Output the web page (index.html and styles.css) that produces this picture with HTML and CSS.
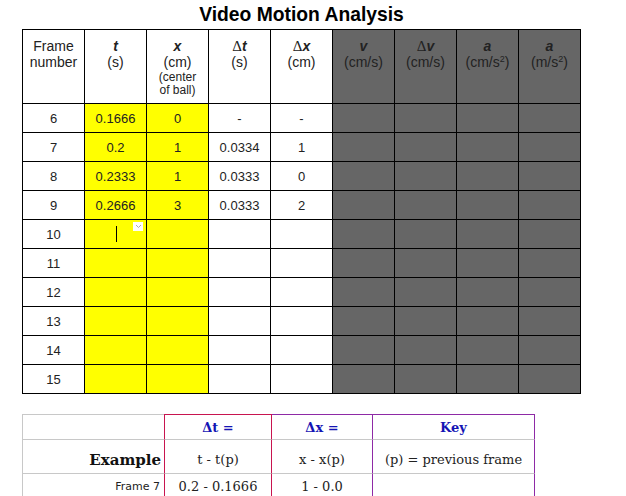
FILE: index.html
```html
<!DOCTYPE html>
<html>
<head>
<meta charset="utf-8">
<link rel="stylesheet" href="styles.css">
</head>
<body>
<div class="page">
  <h1 class="title">Video Motion Analysis</h1>
  <table class="data">
    <thead>
      <tr class="head">
        <th>Frame<br>number</th>
        <th><b><i>t</i></b><br>(s)</th>
        <th><b><i>x</i></b><br>(cm)<br><span class="small">(center<br>of ball)</span></th>
        <th><span class="delta">Δ</span><b><i>t</i></b><br>(s)</th>
        <th><span class="delta">Δ</span><b><i>x</i></b><br>(cm)</th>
        <th class="dark"><b><i>v</i></b><br>(cm/s)</th>
        <th class="dark"><span class="delta">Δ</span><b><i>v</i></b><br>(cm/s)</th>
        <th class="dark"><b><i>a</i></b><br>(cm/s<sup>2</sup>)</th>
        <th class="dark"><b><i>a</i></b><br>(m/s<sup>2</sup>)</th>
      </tr>
    </thead>
    <tbody>
      <tr><td>6</td><td class="yel">0.1666</td><td class="yel">0</td><td>-</td><td>-</td><td class="dark"></td><td class="dark"></td><td class="dark"></td><td class="dark"></td></tr>
      <tr><td>7</td><td class="yel">0.2</td><td class="yel">1</td><td>0.0334</td><td>1</td><td class="dark"></td><td class="dark"></td><td class="dark"></td><td class="dark"></td></tr>
      <tr><td>8</td><td class="yel">0.2333</td><td class="yel">1</td><td>0.0333</td><td>0</td><td class="dark"></td><td class="dark"></td><td class="dark"></td><td class="dark"></td></tr>
      <tr><td>9</td><td class="yel">0.2666</td><td class="yel">3</td><td>0.0333</td><td>2</td><td class="dark"></td><td class="dark"></td><td class="dark"></td><td class="dark"></td></tr>
      <tr><td>10</td><td class="yel edit"><span class="caret"></span><span class="drop"><svg width="7" height="5" viewBox="0 0 7 5"><path d="M1 1 L3.5 3.5 L6 1" fill="none" stroke="#aaa" stroke-width="1"/></svg></span></td><td class="yel"></td><td></td><td></td><td class="dark"></td><td class="dark"></td><td class="dark"></td><td class="dark"></td></tr>
      <tr><td>11</td><td class="yel"></td><td class="yel"></td><td></td><td></td><td class="dark"></td><td class="dark"></td><td class="dark"></td><td class="dark"></td></tr>
      <tr><td>12</td><td class="yel"></td><td class="yel"></td><td></td><td></td><td class="dark"></td><td class="dark"></td><td class="dark"></td><td class="dark"></td></tr>
      <tr><td>13</td><td class="yel"></td><td class="yel"></td><td></td><td></td><td class="dark"></td><td class="dark"></td><td class="dark"></td><td class="dark"></td></tr>
      <tr><td>14</td><td class="yel"></td><td class="yel"></td><td></td><td></td><td class="dark"></td><td class="dark"></td><td class="dark"></td><td class="dark"></td></tr>
      <tr><td>15</td><td class="yel"></td><td class="yel"></td><td></td><td></td><td class="dark"></td><td class="dark"></td><td class="dark"></td><td class="dark"></td></tr>
    </tbody>
  </table>

  <table class="ex">
    <tr class="r1">
      <td class="c1"></td>
      <td class="c2 blue">Δt =</td>
      <td class="c3 blue">Δx =</td>
      <td class="c4 blue">Key</td>
    </tr>
    <tr class="r2">
      <td class="c1 exlabel">Example</td>
      <td class="c2">t - t(p)</td>
      <td class="c3">x - x(p)</td>
      <td class="c4">(p) = previous frame</td>
    </tr>
    <tr class="r3">
      <td class="c1 framelabel">Frame 7</td>
      <td class="c2">0.2 - 0.1666</td>
      <td class="c3">1 - 0.0</td>
      <td class="c4"></td>
    </tr>
  </table>
</div>
</body>
</html>
```
FILE: styles.css
```css
html, body {
  margin: 0;
  padding: 0;
  background: #fff;
}

.page {
  padding: 3px 0 0 22px;
  width: 559px;
}

.title {
  margin: 0 0 3px 0;
  height: 23px;
  line-height: 23px;
  text-align: center;
  font-family: "Liberation Sans", Arial, sans-serif;
  font-size: 19.3px;
  font-weight: bold;
  color: #000;
}

.data {
  border-collapse: collapse;
  table-layout: fixed;
  width: 559px;
  font-family: "Liberation Sans", Arial, sans-serif;
  color: #222;
}

.data th, .data td {
  border: 1px solid #000;
  padding: 0;
  text-align: center;
}

.data th {
  height: 74px;
  vertical-align: top;
  font-weight: normal;
  font-size: 14px;
  line-height: 16px;
  padding-top: 8px;
  box-sizing: border-box;
}

.data th b {
  font-weight: bold;
}

.data th .delta {
  font-family: "Liberation Serif", "Times New Roman", serif;
  font-size: 15px;
}

.data th sup {
  font-size: 9px;
  line-height: 0;
  vertical-align: 5px;
}

.data th .small {
  display: inline-block;
  font-size: 12px;
  line-height: 13px;
  margin-top: 1px;
}

.data td {
  height: 28px;
  font-size: 13px;
  vertical-align: middle;
}

.data .dark {
  background: #666666;
}

.data .yel {
  background: #ffff00;
}

.data td.edit {
  position: relative;
}

.caret {
  position: absolute;
  left: 31px;
  top: 6px;
  width: 1px;
  height: 16px;
  background: #000;
}

.drop {
  position: absolute;
  left: 48px;
  top: 2px;
  width: 10px;
  height: 9px;
  background: #fff;
  display: flex;
  align-items: center;
  justify-content: center;
}

.drop svg {
  display: block;
}

.ex {
  margin-top: 20px;
  border-collapse: separate;
  border-spacing: 0;
  table-layout: fixed;
  width: 513px;
  font-family: "DejaVu Serif", Georgia, serif;
  font-size: 13px;
  color: #222;
}

.ex td {
  padding: 0;
  text-align: center;
  border-top: 1px solid #c8c8c8;
  border-left: 1px solid #c8c8c8;
}

.ex .c1 { width: 141px; }
.ex .c2 { width: 106px; border-left: 1px solid #c8144f; border-right: 1px solid #c8144f; }
.ex .c3 { width: 100px; border-left: 0; }
.ex .c4 { width: 161px; border-left: 1px solid #8e2aa6; border-right: 1px solid #8e2aa6; }

.ex .r1 td { height: 24px; }
.ex .r1 .c2 { border-top-color: #c8144f; }
.ex .r1 .c3, .ex .r1 .c4 { border-top-color: #8e2aa6; }

.ex .r2 td {
  height: 34px;
  padding-top: 6px;
  box-sizing: border-box;
}

.ex .r3 td { height: 24px; }

.blue {
  color: #1414b4;
  font-weight: bold;
}

.ex .exlabel {
  text-align: right;
  font-weight: bold;
  font-size: 15px;
  padding-right: 3px;
  color: #111;
}

.ex .framelabel {
  text-align: right;
  font-family: "DejaVu Sans", Verdana, sans-serif;
  font-size: 11px;
  padding-right: 4px;
}
```
